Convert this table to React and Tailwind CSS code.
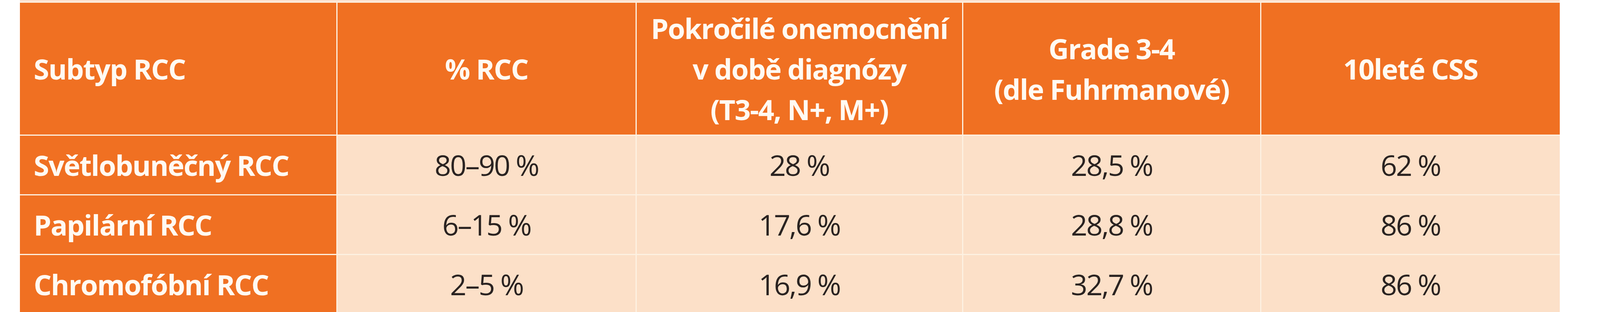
export default function App() {
  const headers = [
    ["Subtyp RCC"],
    ["% RCC"],
    ["Pokročilé onemocnění", "v době diagnózy", "(T3-4, N+, M+)"],
    ["Grade 3-4", "(dle Fuhrmanové)"],
    ["10leté CSS"],
  ];
  const rows = [
    ["Světlobuněčný RCC", "80–90 %", "28 %", "28,5 %", "62 %"],
    ["Papilární RCC", "6–15 %", "17,6 %", "28,8 %", "86 %"],
    ["Chromofóbní RCC", "2–5 %", "16,9 %", "32,7 %", "86 %"],
  ];
  return (
    <div className="w-full h-[800px] overflow-hidden bg-white font-['Open_Sans','Liberation_Sans',sans-serif]">
      <div className="ml-[1.2473%] w-[96.237%] grid grid-cols-[920fr_866fr_946fr_863fr_868fr] grid-rows-[4px_338px_150px_150px_150px] gap-[3px] bg-[#fdf1e2]">
        <div className="col-span-5 bg-[#fbe2d0]" />
        {headers.map((lines, i) => (
          <div
            key={i}
            className={
              i === 0
                ? "bg-[#f07022] flex items-center justify-start pl-[0.86vw] text-[#fffaf2] font-bold text-[72px] leading-[104px] tracking-[-2px]"
                : "bg-[#f07022] flex flex-col items-center justify-center text-center text-[#fffaf2] font-bold text-[72px] leading-[104px] tracking-[-2px]"
            }
          >
            {lines.map((l, j) => (
              <div key={j} className="whitespace-nowrap">{l}</div>
            ))}
          </div>
        ))}
        {rows.map((r, ri) =>
          r.map((c, ci) =>
            ci === 0 ? (
              <div
                key={ri + "-" + ci}
                className="bg-[#f07022] flex items-center pl-[0.86vw] text-[#fffaf2] font-bold text-[72px] leading-none tracking-[-2px] whitespace-nowrap"
              >
                {c}
              </div>
            ) : (
              <div
                key={ri + "-" + ci}
                className="bg-[#fce0c8] flex items-center justify-center text-[#2a2321] font-normal text-[74px] leading-none tracking-[-3px] whitespace-nowrap"
              >
                {c}
              </div>
            )
          )
        )}
      </div>
    </div>
  );
}
